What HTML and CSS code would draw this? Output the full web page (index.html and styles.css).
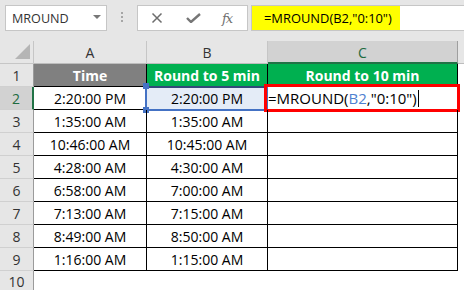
FILE: index.html
```html
<!DOCTYPE html>
<html>
<head>
<meta charset="utf-8">
<link rel="stylesheet" href="styles.css">
</head>
<body>
<div class="app">
  <div class="topbar">
    <div class="namebox">
      <span class="nb-text">MROUND</span>
      <span class="nb-arrow"></span>
    </div>
    <div class="dots"><i></i><i></i><i></i></div>
    <div class="fxgroup">
      <svg class="ic-x" width="12" height="12" viewBox="0 0 12 12"><path d="M1.5 1.5 L10.5 10.5 M10.5 1.5 L1.5 10.5" stroke="#6d6d6d" stroke-width="1.5" fill="none"/></svg>
      <svg class="ic-check" width="15" height="10" viewBox="0 0 15 10"><path d="M1 5 L5 9 L14 1" stroke="#767676" stroke-width="2.4" fill="none"/></svg>
      <span class="ic-fx">fx</span>
    </div>
    <div class="formula">
      <span class="formula-text">=MROUND(B2,"0:10")</span>
    </div>
  </div>
  <div class="sheet">
    <div class="corner"><span class="tri"></span></div>
    <div class="colhdr">A</div>
    <div class="colhdr">B</div>
    <div class="colhdr active">C</div>
    <div class="colhdr rest"></div>

    <div class="rowhdr">1</div>
    <div class="cell head gray">Time</div>
    <div class="cell head green">Round to 5 min</div>
    <div class="cell head green">Round to 10 min</div>
    <div class="blank"></div>

    <div class="rowhdr active">2</div>
    <div class="cell">2:20:00 PM</div>
    <div class="cell ref">2:20:00 PM<span class="ref-box"></span><span class="handle h-tl"></span><span class="handle h-bl"></span></div>
    <div class="cell edit">=MROUND(<span class="refcol">B2</span>,"0:10")<span class="caret"></span><span class="redbox"></span></div>
    <div class="blank"></div>

    <div class="rowhdr">3</div>
    <div class="cell">1:35:00 AM</div>
    <div class="cell">1:35:00 AM</div>
    <div class="cell"></div>
    <div class="blank"></div>

    <div class="rowhdr">4</div>
    <div class="cell">10:46:00 AM</div>
    <div class="cell">10:45:00 AM</div>
    <div class="cell"></div>
    <div class="blank"></div>

    <div class="rowhdr">5</div>
    <div class="cell">4:28:00 AM</div>
    <div class="cell">4:30:00 AM</div>
    <div class="cell"></div>
    <div class="blank"></div>

    <div class="rowhdr">6</div>
    <div class="cell">6:58:00 AM</div>
    <div class="cell">7:00:00 AM</div>
    <div class="cell"></div>
    <div class="blank"></div>

    <div class="rowhdr">7</div>
    <div class="cell">7:13:00 AM</div>
    <div class="cell">7:15:00 AM</div>
    <div class="cell"></div>
    <div class="blank"></div>

    <div class="rowhdr">8</div>
    <div class="cell">8:49:00 AM</div>
    <div class="cell">8:50:00 AM</div>
    <div class="cell"></div>
    <div class="blank"></div>

    <div class="rowhdr">9</div>
    <div class="cell">1:16:00 AM</div>
    <div class="cell">1:15:00 AM</div>
    <div class="cell"></div>
    <div class="blank"></div>

    <div class="rowhdr last">10</div>
    <div class="blank"></div>
    <div class="blank"></div>
    <div class="blank"></div>
    <div class="blank"></div>
  </div>
</div>
</body>
</html>
```

FILE: styles.css
```css
* { box-sizing: border-box; }
html, body { margin: 0; padding: 0; }
body {
  width: 464px;
  height: 290px;
  overflow: hidden;
  background: #ffffff;
  font-family: "Open Sans", "Liberation Sans", sans-serif;
}
.app { width: 464px; height: 290px; overflow: hidden; }

.topbar {
  height: 41px;
  background: #e6e6e6;
  display: flex;
  align-items: flex-start;
  padding: 5px 0 0 5px;
}
.namebox {
  width: 102px;
  height: 26px;
  background: #fff;
  border: 1px solid #c6c6c6;
  display: flex;
  align-items: center;
  justify-content: space-between;
  padding: 0 5px 0 6px;
}
.nb-text { font-size: 12.6px; color: #333; letter-spacing: 0; }
.nb-arrow {
  width: 0; height: 0;
  border-left: 4px solid transparent;
  border-right: 4px solid transparent;
  border-top: 4px solid #777;
  margin-top: -2px;
}
.dots {
  width: 2px;
  margin: 7px 14px 0 14px;
  display: flex;
  flex-direction: column;
  gap: 2px;
}
.dots i { display: block; width: 2px; height: 2px; background: #a6a6a6; }
.fxgroup {
  width: 111px;
  height: 26px;
  background: #fff;
  border: 1px solid #c6c6c6;
  display: flex;
  align-items: center;
  padding: 0 0 0 13px;
}
.ic-x { margin-right: 23px; }
.ic-check { margin-right: 21px; }
.ic-fx {
  font-family: "DejaVu Serif", "Liberation Serif", serif;
  font-style: italic;
  font-size: 13px;
  color: #707070;
  letter-spacing: -1px;
}
.formula {
  flex: 1;
  height: 26px;
  margin-left: 3px;
  background: #fff;
  border: 1px solid #c6c6c6;
  border-right: none;
  display: flex;
}
.formula-text {
  background: #ffff00;
  font-size: 12.9px;
  color: #000;
  display: flex;
  align-items: center;
  padding: 0 8px 0 12px;
  height: 24px;
}

.sheet {
  display: grid;
  grid-template-columns: 34px 113px 121px 190px 1fr;
  grid-template-rows: 23px repeat(9, 23px) 20px;
}
.corner {
  background: #e6e6e6;
  border-right: 1px solid #c6c6c6;
  border-bottom: 1px solid #c6c6c6;
  position: relative;
}
.tri {
  position: absolute;
  right: 3px;
  bottom: 4px;
  width: 0; height: 0;
  border-left: 15px solid transparent;
  border-bottom: 15px solid #b5b5b5;
}
.colhdr {
  background: #e6e6e6;
  border-right: 1px solid #c6c6c6;
  border-bottom: 1px solid #bdbdbd;
  display: flex;
  align-items: center;
  justify-content: center;
  font-size: 14px;
  color: #333;
  padding-top: 1px;
}
.colhdr.active {
  background: #d2d2d2;
  border-bottom: 2px solid #217346;
  color: #1e6b40;
  border-right-color: #9f9f9f;
}
.colhdr.rest { border-right: none; }

.rowhdr {
  background: #e6e6e6;
  border-right: 1px solid #9b9b9b;
  border-bottom: 1px solid #d0d0d0;
  display: flex;
  align-items: center;
  justify-content: center;
  font-size: 14px;
  color: #333;
}
.rowhdr.active {
  background: #d2d2d2;
  border-right: 2px solid #217346;
  color: #1e6b40;
}
.rowhdr.last { border-bottom: none; }

.cell {
  border-right: 1px solid #000;
  border-bottom: 1px solid #000;
  display: flex;
  align-items: center;
  justify-content: center;
  font-size: 14px;
  color: #000;
  white-space: nowrap;
  position: relative;
}
.cell.head { color: #fff; font-weight: 700; font-size: 14px; }
.cell.gray { background: #808080; }
.cell.green { background: #00b050; }
.cell.ref { background: #e4ecf7; }
.ref-box {
  position: absolute;
  left: -2px;
  top: -1px;
  right: -1px;
  bottom: -2px;
  border: 2px solid #4472c4;
  border-top-color: #33497a;
}
.handle {
  position: absolute;
  width: 6px;
  height: 6px;
  background: #4472c4;
  left: -4px;
}
.h-tl { top: -4px; }
.h-bl { bottom: -4px; }
.cell.edit {
  justify-content: flex-start;
  font-size: 15px;
  padding-left: 0;
  overflow: visible;
}
.refcol { color: #4f81d0; }
.caret {
  display: inline-block;
  width: 1px;
  height: 17px;
  background: #000;
  margin-left: 1px;
}
.redbox {
  position: absolute;
  left: -4px;
  top: -3px;
  width: 196px;
  height: 28px;
  border: 3px solid #ff0000;
}
.blank { background: #fff; }
```
